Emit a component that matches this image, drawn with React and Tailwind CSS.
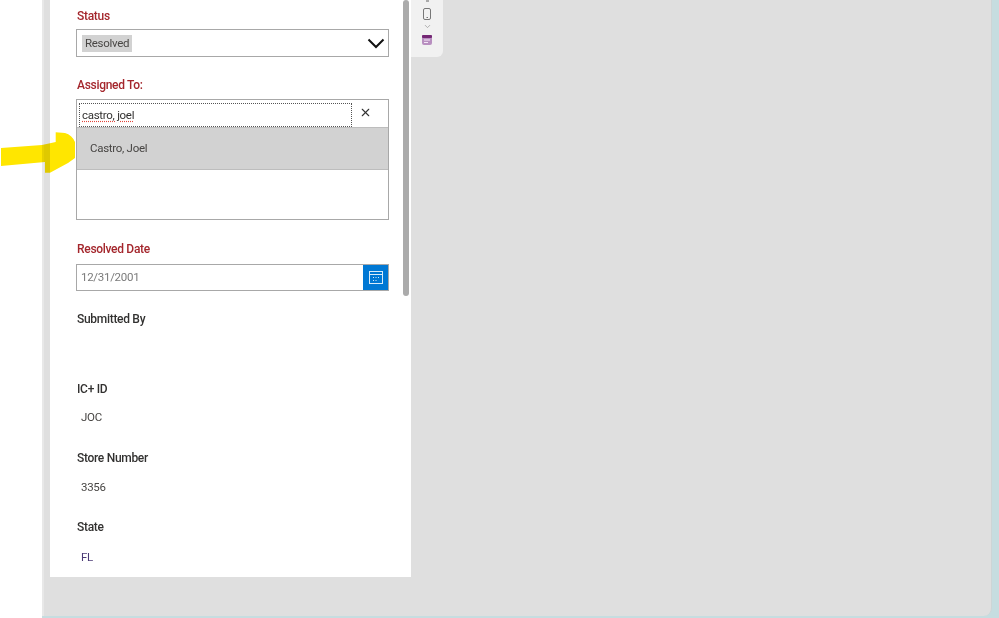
import { ChevronDown, X } from "lucide-react";

const font = "font-['Roboto','Noto_Sans',sans-serif]";

function Label({ children, required, className }) {
  return (
    <div
      className={`h-5 pl-[1px] text-[12px] leading-5 font-medium tracking-tight ${
        required ? "text-[#a4262c]" : "text-[#323130]"
      } ${className}`}
    >
      {children}
    </div>
  );
}

function Value({ children, className, color = "text-[#484644]" }) {
  return (
    <div className={`h-5 pl-[5px] text-[11.5px] tracking-tight leading-5 ${color} ${className}`}>
      {children}
    </div>
  );
}

function Toolbar() {
  return (
    <div className="relative flex h-[57px] w-8 flex-col items-center rounded-br-md bg-[#f1f1f1]">
      <div className="absolute top-0 h-[2px] w-[3px] bg-[#aaa]" />
      <svg className="mt-[7px]" width="10" height="14" viewBox="0 0 10 14" fill="none">
        <rect x="1.500" y="1.500" width="7" height="11" rx="1.500" stroke="#777" />
        <path d="M4.500 10.500h1.500" stroke="#777" />
      </svg>
      <ChevronDown className="mt-[1px] text-[#999]" size={9} />
      <svg className="mt-[4px]" width="10" height="10" viewBox="0 0 10 10">
        <rect width="10" height="10" rx="2" fill="#b88fc0" />
        <rect width="10" height="3" rx="1" fill="#742774" />
        <path d="M2 5h6M2 7.500h4" stroke="#f3e6f5" />
      </svg>
    </div>
  );
}

function Arrow() {
  return (
    <svg
      className="absolute top-[130px] left-0 mix-blend-multiply"
      width="78"
      height="46"
      viewBox="0 0 78 46"
    >
      <path
        d="M1 18 L42 15 L55.700 12 L55.700 2.300 L65 3 Q72 5 75 12 L75 28 L68 33 L50 42.700 L45 42.700 L45 32 L1 36 Z"
        fill="#ffe600"
      />
    </svg>
  );
}

export default function App() {
  return (
    <div className={`relative flex h-[618px] w-[999px] overflow-hidden bg-white ${font}`}>
      <div className="w-[42px] shrink-0" />

      <div className="flex min-w-0 flex-1 flex-col bg-[#c6dde0]">
        <div className="flex h-[616px] w-[950px] rounded-br-lg border-r border-l-2 border-r-[#cdd5d6] border-l-[#e8e8e8] bg-[#dfdfdf] pl-[6px]">
          <div className="relative h-[577px] w-[361px] shrink-0 overflow-hidden bg-white pt-[6px] pl-[26px]">
            <div className="w-[313px]">
              <Label required>Status</Label>
              <div className="mt-[3px] flex h-7 items-center justify-between border border-[#a8a8a8] pr-[3px] pl-[5px]">
                <span className="mt-[1px] bg-[#d2d2d2] px-[3px] text-[11.5px] leading-[17px] tracking-tight text-[#484644]">
                  Resolved
                </span>
                <svg width="18" height="11" viewBox="0 0 18 11" fill="none" stroke="#111" strokeWidth="2">
                  <path d="M1.500 1.500 L9 9 L16.500 1.500" />
                </svg>
              </div>

              <Label required className="mt-[18px]">
                Assigned To:
              </Label>
              <div className="mt-[4px] h-[121px] border border-[#a8a8a8]">
                <div className="flex h-[27px] items-start pt-[3px] pl-[2px]">
                  <div className="h-[24px] w-[273px] border border-dotted border-[#555] pl-[2px] text-[11.5px] leading-[23px] tracking-tight text-[#323130]">
                    <span className="underline decoration-[#e0453a] decoration-dotted underline-offset-2">
                      castro, joel
                    </span>
                  </div>
                  <X className="mt-[3px] ml-[7px] text-[#333]" size={13} />
                </div>
                <div className="flex h-[43px] items-center border-y border-[#bdbdbd] bg-[#d2d2d2] pl-[13px] text-[11.5px] tracking-tight text-[#484644]">
                  Castro, Joel
                </div>
              </div>

              <Label required className="mt-[19px]">
                Resolved Date
              </Label>
              <div className="mt-[5px] flex h-[27px] items-stretch border border-[#a8a8a8]">
                <div className="flex-1 pl-[4px] text-[11.5px] leading-[25px] tracking-tight text-[#7a7a7a]">
                  12/31/2001
                </div>
                <div className="flex w-[25px] items-center justify-center bg-[#0078d4]">
                  <svg width="14" height="13" viewBox="0 0 14 13" fill="none" stroke="#d8ebfa">
                    <rect x="0.500" y="0.500" width="13" height="12" />
                    <path d="M0.500 3.500h13" />
                    <path d="M4.500 6v1M7 6v1M9.500 6v1M4.500 9v1M7 9v1" />
                  </svg>
                </div>
              </div>

              <Label className="mt-[18px]">Submitted By</Label>
              <Label className="mt-[50px]">IC+ ID</Label>
              <Value className="mt-2">JOC</Value>
              <Label className="mt-[21px]">Store Number</Label>
              <Value className="mt-[9px]">3356</Value>
              <Label className="mt-5">State</Label>
              <Value className="mt-[10px]" color="text-[#4b3a75]">
                FL
              </Value>
            </div>

            <div className="absolute top-0 right-[2px] h-[296px] w-[6px] rounded-full bg-[#ababab]" />
          </div>
          <Toolbar />
        </div>
      </div>

      <Arrow />
    </div>
  );
}
